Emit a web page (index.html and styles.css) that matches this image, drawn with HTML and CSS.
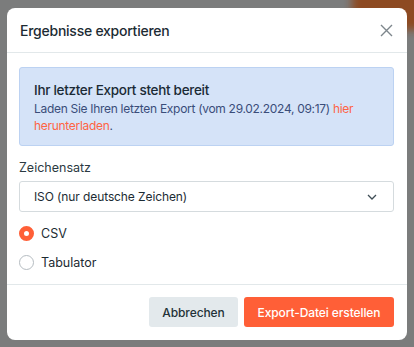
FILE: index.html
```html
<!DOCTYPE html>
<html lang="de">
<head>
<meta charset="utf-8">
<link rel="stylesheet" href="styles.css">
</head>
<body>
<div class="backdrop-blob"></div>
<div class="modal">
  <div class="modal-header">
    <h2 class="modal-title">Ergebnisse exportieren</h2>
    <button class="close-btn" aria-label="Schließen">
      <svg width="13" height="13" viewBox="0 0 13 13"><path d="M1 1L12 12M12 1L1 12" stroke="#7d868c" stroke-width="1.4" fill="none"/></svg>
    </button>
  </div>
  <div class="modal-body">
    <div class="alert">
      <div class="alert-title">Ihr letzter Export steht bereit</div>
      <p class="alert-text">Laden Sie Ihren letzten Export (vom 29.02.2024, 09:17) <span class="link">hier</span><br><span class="link">herunterladen</span>.</p>
    </div>
    <div class="field-label">Zeichensatz</div>
    <div class="select">
      <span>ISO (nur deutsche Zeichen)</span>
      <svg width="10" height="6" viewBox="0 0 10 6"><path d="M1 1L5 5L9 1" stroke="#3f4d55" stroke-width="1.3" fill="none"/></svg>
    </div>
    <div class="radio-row"><span class="radio checked"></span><span>CSV</span></div>
    <div class="radio-row second"><span class="radio"></span><span>Tabulator</span></div>
  </div>
  <div class="modal-footer">
    <button class="btn btn-secondary">Abbrechen</button>
    <button class="btn btn-primary">Export-Datei erstellen</button>
  </div>
</div>
</body>
</html>
```
FILE: styles.css
```css
* { box-sizing: border-box; }
html, body { margin: 0; padding: 0; }
body {
  width: 414px;
  height: 347px;
  overflow: hidden;
  background: #7b7c7c;
  font-family: "Inter", "Open Sans", sans-serif;
  color: #1c2b33;
  position: relative;
  padding: 8px 7px 0 7px;
}
.backdrop-blob {
  position: absolute;
  top: -10px;
  right: -10px;
  width: 72px;
  height: 40px;
  background: #8d4a22;
  filter: blur(4px);
}
.modal {
  position: relative;
  width: 400px;
  height: 332px;
  background: #fff;
  border-radius: 8px;
  display: flex;
  flex-direction: column;
}
.modal-header {
  height: 45px;
  border-bottom: 1px solid #e2e8ea;
  display: flex;
  align-items: center;
  justify-content: space-between;
  padding: 0 14px 0 13px;
}
.modal-title {
  margin: 0;
  font-size: 14px;
  font-weight: 500;
  letter-spacing: -0.25px;
}
.close-btn {
  border: 0;
  background: none;
  padding: 0;
  display: flex;
  cursor: pointer;
}
.modal-body {
  flex: 1;
  padding: 14px 13px 0 12px;
}
.alert {
  height: 79px;
  background: #d5e3f8;
  border: 1px solid #bcd2f2;
  border-radius: 3px;
  padding: 12px 14px 0 14px;
}
.alert-title {
  font-size: 13.5px;
  font-weight: 500;
  line-height: 20px;
  letter-spacing: -0.3px;
  color: #1a2a35;
}
.alert-text {
  margin: 0;
  font-size: 12px;
  line-height: 17px;
  letter-spacing: -0.3px;
  color: #3a4d7a;
}
.link { color: #ff6444; }
.field-label {
  margin-top: 13px;
  font-size: 12.5px;
  line-height: 18px;
  color: #2b3a42;
}
.select {
  margin-top: 4px;
  height: 31px;
  border: 1px solid #d5dbde;
  border-radius: 3px;
  display: flex;
  align-items: center;
  justify-content: space-between;
  padding: 0 16px 0 14px;
  font-size: 12px;
  letter-spacing: -0.1px;
  color: #1c2b33;
}
.radio-row {
  margin-top: 10px;
  height: 22px;
  display: flex;
  align-items: center;
  gap: 7px;
  font-size: 12.5px;
  color: #1c2b33;
}
.radio-row.second { margin-top: 7px; }
.radio {
  width: 15px;
  height: 15px;
  border-radius: 50%;
  border: 1px solid #b5bcc1;
  background: #fff;
}
.radio.checked {
  border: 5px solid #ff5f37;
}
.modal-footer {
  height: 56px;
  border-top: 1px solid #e2e8ea;
  display: flex;
  justify-content: flex-end;
  align-items: flex-start;
  gap: 6px;
  padding: 12px 13px 0 0;
}
.btn {
  height: 30px;
  border: 0;
  border-radius: 3px;
  font-family: inherit;
  font-size: 12px;
  letter-spacing: -0.1px;
  font-weight: 500;
  padding: 0;
  cursor: pointer;
}
.btn-secondary {
  width: 89px;
  background: #e3e9ec;
  color: #233238;
}
.btn-primary {
  width: 150px;
  background: #ff5f37;
  color: #fff;
}
```
